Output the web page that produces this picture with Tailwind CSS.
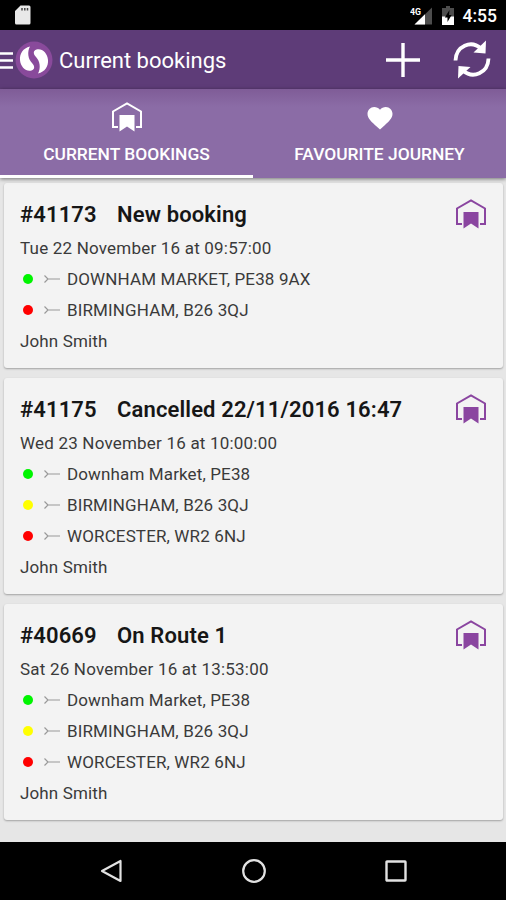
<!DOCTYPE html>
<html lang="en">
<head>
    <meta charset="UTF-8">
    <meta name="viewport" content="width=device-width, initial-scale=1.0">
    <title>Current bookings</title>
    <script src="https://cdn.jsdelivr.net/npm/@tailwindcss/browser@4"></script>
</head>
<body class="bg-[#e6e6e6] font-['Roboto',sans-serif] w-[506px] h-[900px] flex flex-col overflow-hidden">
    <!-- Shared icons -->
    <svg class="hidden">
        <symbol id="home" viewBox="0 0 32 32">
            <path d="M7 26H2V10.500L16 2.500L30 10.500V26H25" fill="none" stroke="currentColor" stroke-width="2"/>
            <path d="M8.500 14H23.500V30.500L16 25.500L8.500 30.500Z" fill="currentColor"/>
        </symbol>
        <symbol id="arrow" viewBox="0 0 16 8">
            <path d="M0.500 0.500L4 4L0.500 7.500M4 4H16" fill="none" stroke="currentColor" stroke-width="1.200"/>
        </symbol>
    </svg>

    <!-- Status bar -->
    <div class="h-[30px] shrink-0 bg-black flex items-center justify-between pl-[15px] pr-[9px]">
        <svg class="w-4 h-5" viewBox="0 0 16 20">
            <path d="M5.500 0.500H14A1.500 1.500 0 0 1 15.500 2V18A1.500 1.500 0 0 1 14 19.500H1.500A1.500 1.500 0 0 1 0 18V6Z" fill="#e8e8e8"/>
            <path d="M7 3V5.500M9.800 3V5.500M12.500 3V5.500" stroke="#444" stroke-width="1.500"/>
        </svg>
        <div class="flex items-center">
            <svg class="w-[23px] h-[22px]" viewBox="0 0 23 22">
                <path d="M22 3.500V20.500H4.500Z" fill="#4d4d4d"/>
                <path d="M15 10.300V20.500H4.500Z" fill="#fff"/>
                <text x="0" y="10.500" font-size="9.500" font-weight="700" fill="#fff" textLength="11" lengthAdjust="spacingAndGlyphs">4G</text>
            </svg>
            <svg class="w-3 h-[19px] ml-[9px]" viewBox="0 0 12 19">
                <path d="M4 0H8V2H12V11H0V2H4Z" fill="#4d4d4d"/>
                <path d="M0 10.500H12V19H0Z" fill="#fff"/>
                <path d="M7.500 4L2.800 11.500H5.500V16L9.600 9H7Z" fill="#000"/>
            </svg>
            <span class="ml-[9px] mt-0.5 text-[17.500px] font-medium leading-5 text-white">4:55</span>
        </div>
    </div>

    <!-- Toolbar -->
    <header class="h-[59px] shrink-0 bg-[#5e3c78] flex items-center text-white">
        <svg class="w-[13px] h-[18px]" viewBox="0 0 13 18" stroke="#fff" stroke-width="2.500">
            <path d="M0 2.500H13M0 9.500H13M0 16.500H13"/>
        </svg>
        <svg class="w-[38px] h-[38px] ml-0.5" viewBox="0 0 38 38">
            <circle cx="19" cy="19" r="18.500" fill="#894a9b"/>
            <path d="M15 5.500C8 7 4.500 13 5 19C5.500 26 11 31 16.500 29.500C20 28.500 20 25 17 22C13 18 12 11 15 5.500Z" fill="#fff"/>
            <path d="M23 32.500C30 31 33.500 25 33 19C32.500 12 27 7 21.500 8.500C18 9.500 18 13 21 16C25 20 26 27 23 32.500Z" fill="#fff"/>
        </svg>
        <h1 class="ml-[6px] mt-0.5 text-[22px] leading-8">Current bookings</h1>
        <svg class="w-[34px] h-[34px] ml-auto" viewBox="0 0 34 34" stroke="#fff" stroke-width="3.400">
            <path d="M0 17H34M17 0V34"/>
        </svg>
        <svg class="w-[38px] h-[40px] ml-[33px] mr-[15px]" viewBox="0 0 38 40">
            <path d="M2.500 20.500C3 6 18 -0.500 28 8.500M35.500 18.500C35 33 20 39.500 10 30.500" fill="none" stroke="#fff" stroke-width="3.800"/>
            <path d="M33 0.500L32.500 13.500L20.500 12.500Z" fill="#fff"/>
            <path d="M5 38.500L5.500 26L17.500 27Z" fill="#fff"/>
        </svg>
    </header>

    <!-- Tabs -->
    <nav class="h-[89px] shrink-0 grid grid-cols-2 bg-linear-to-b from-[#7f5c97] from-0% via-[#8b6ca6] via-20% to-[#8b6ca6] text-white text-[17.400px] font-medium shadow-[0_1px_4px_rgba(0,0,0,0.5)] z-10">
        <div class="flex flex-col items-center border-b-3 border-white pt-[12px]">
            <svg class="w-8 h-8"><use href="#home"/></svg>
            <span class="mt-[10px] leading-[22px]">CURRENT BOOKINGS</span>
        </div>
        <div class="flex flex-col items-center pt-[12px]">
            <svg class="w-[26px] h-8" viewBox="0 0 26 32">
                <path d="M13 28.500L10.500 26.300C4 20.500 0.500 17.500 0.500 12.800C0.500 9 3.500 6 7.200 6C9.400 6 11.600 7 13 8.800C14.400 7 16.600 6 18.800 6C22.500 6 25.500 9 25.500 12.800C25.500 17.500 22 20.500 15.500 26.300Z" fill="#fff"/>
            </svg>
            <span class="mt-[10px] leading-[22px]">FAVOURITE JOURNEY</span>
        </div>
    </nav>

    <!-- Bookings -->
    <main class="grow flex flex-col gap-[10px] pt-[5px] pl-1 pr-[3px] text-[17px] leading-[31px] tracking-[0.13px] text-[#3a3a3a]">
        <article class="relative rounded-[3px] bg-[#f3f3f3] shadow-[0_1px_2px_rgba(0,0,0,0.3)] pt-[14px] pb-[11px] pl-4">
            <svg class="absolute right-4 top-[15px] w-8 h-8 text-[#8a45a0]"><use href="#home"/></svg>
            <h2 class="flex text-[22px] leading-9 font-semibold text-[#161616]"><span class="w-[97px]">#41173</span>New booking</h2>
            <p class="tracking-[0.200px]">Tue 22 November 16 at 09:57:00</p>
            <div class="flex items-center pl-[3px]"><i class="size-[10px] -mt-px rounded-full bg-[#00f500]"></i><svg class="w-4 h-2 ml-[11px] mr-[7px] -mt-px text-[#999]"><use href="#arrow"/></svg><span>DOWNHAM MARKET, PE38 9AX</span></div>
            <div class="flex items-center pl-[3px]"><i class="size-[10px] -mt-px rounded-full bg-[#ff0000]"></i><svg class="w-4 h-2 ml-[11px] mr-[7px] -mt-px text-[#999]"><use href="#arrow"/></svg><span>BIRMINGHAM, B26 3QJ</span></div>
            <p>John Smith</p>
        </article>
        <article class="relative rounded-[3px] bg-[#f3f3f3] shadow-[0_1px_2px_rgba(0,0,0,0.3)] pt-[14px] pb-[11px] pl-4">
            <svg class="absolute right-4 top-[15px] w-8 h-8 text-[#8a45a0]"><use href="#home"/></svg>
            <h2 class="flex text-[22px] leading-9 font-semibold text-[#161616]"><span class="w-[97px]">#41175</span>Cancelled 22/11/2016 16:47</h2>
            <p class="tracking-[0.200px]">Wed 23 November 16 at 10:00:00</p>
            <div class="flex items-center pl-[3px]"><i class="size-[10px] -mt-px rounded-full bg-[#00f500]"></i><svg class="w-4 h-2 ml-[11px] mr-[7px] -mt-px text-[#999]"><use href="#arrow"/></svg><span>Downham Market, PE38</span></div>
            <div class="flex items-center pl-[3px]"><i class="size-[10px] -mt-px rounded-full bg-[#ffff00]"></i><svg class="w-4 h-2 ml-[11px] mr-[7px] -mt-px text-[#999]"><use href="#arrow"/></svg><span>BIRMINGHAM, B26 3QJ</span></div>
            <div class="flex items-center pl-[3px]"><i class="size-[10px] -mt-px rounded-full bg-[#ff0000]"></i><svg class="w-4 h-2 ml-[11px] mr-[7px] -mt-px text-[#999]"><use href="#arrow"/></svg><span>WORCESTER, WR2 6NJ</span></div>
            <p>John Smith</p>
        </article>
        <article class="relative rounded-[3px] bg-[#f3f3f3] shadow-[0_1px_2px_rgba(0,0,0,0.3)] pt-[14px] pb-[11px] pl-4">
            <svg class="absolute right-4 top-[15px] w-8 h-8 text-[#8a45a0]"><use href="#home"/></svg>
            <h2 class="flex text-[22px] leading-9 font-semibold text-[#161616]"><span class="w-[97px]">#40669</span>On Route 1</h2>
            <p class="tracking-[0.200px]">Sat 26 November 16 at 13:53:00</p>
            <div class="flex items-center pl-[3px]"><i class="size-[10px] -mt-px rounded-full bg-[#00f500]"></i><svg class="w-4 h-2 ml-[11px] mr-[7px] -mt-px text-[#999]"><use href="#arrow"/></svg><span>Downham Market, PE38</span></div>
            <div class="flex items-center pl-[3px]"><i class="size-[10px] -mt-px rounded-full bg-[#ffff00]"></i><svg class="w-4 h-2 ml-[11px] mr-[7px] -mt-px text-[#999]"><use href="#arrow"/></svg><span>BIRMINGHAM, B26 3QJ</span></div>
            <div class="flex items-center pl-[3px]"><i class="size-[10px] -mt-px rounded-full bg-[#ff0000]"></i><svg class="w-4 h-2 ml-[11px] mr-[7px] -mt-px text-[#999]"><use href="#arrow"/></svg><span>WORCESTER, WR2 6NJ</span></div>
            <p>John Smith</p>
        </article>
    </main>

    <!-- Navigation bar -->
    <footer class="h-[58px] shrink-0 bg-black flex items-center justify-between pl-[100px] pr-[99px]">
        <svg class="w-[22px] h-6" viewBox="0 0 22 24"><path d="M20.500 2V22L2 12Z" fill="none" stroke="#e2e2e2" stroke-width="2.200" stroke-linejoin="round"/></svg>
        <svg class="w-6 h-6" viewBox="0 0 24 24"><circle cx="12" cy="12" r="10.800" fill="none" stroke="#e2e2e2" stroke-width="2.200"/></svg>
        <svg class="w-[22px] h-[22px]" viewBox="0 0 22 22"><rect x="1.500" y="1.500" width="19" height="19" rx="0.500" fill="none" stroke="#e2e2e2" stroke-width="2.400"/></svg>
    </footer>
</body>
</html>
